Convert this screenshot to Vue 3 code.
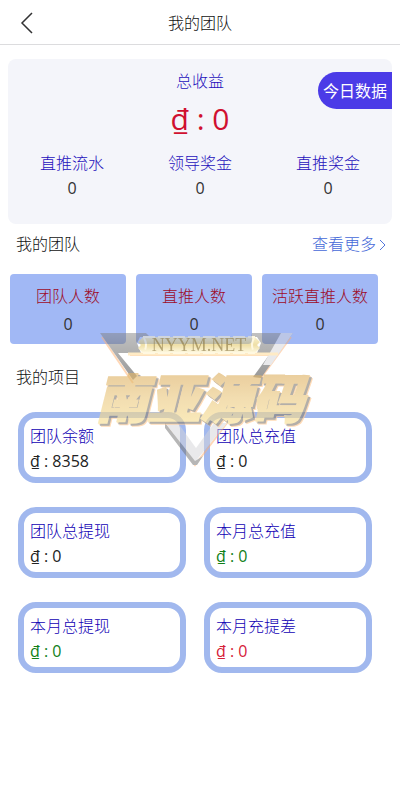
<script setup>
import {ref} from 'vue'

const CURRENCY = "₫"

const total = ref(0)

const income = ref([
    {name: "直推流水", value: 0},
    {name: "领导奖金", value: 0},
    {name: "直推奖金", value: 0}
])

const team = ref([
    {name: "团队人数", value: 0},
    {name: "直推人数", value: 0},
    {name: "活跃直推人数", value: 0}
])

const projects = ref([
    {name: "团队余额", value: 8358},
    {name: "团队总充值", value: 0},
    {name: "团队总提现", value: 0},
    {name: "本月总充值", value: 0, color: "green"},
    {name: "本月总提现", value: 0, color: "green"},
    {name: "本月充提差", value: 0, color: "red"}
])

const money = value => `${CURRENCY} : ${value}`

const goBack = () => history.back()
</script>

<template>
    <div class="page">
        <header>
            <button class="back" aria-label="返回" @click="goBack">
                <svg viewBox="0 0 14 22">
                    <path d="M12 1 L2 11 L12 21" />
                </svg>
            </button>
            <h1>我的团队</h1>
        </header>

        <main>
            <section class="summary">
                <button class="today">今日数据</button>
                <div class="label">总收益</div>
                <div class="total">{{ money(total) }}</div>
                <div class="income">
                    <div v-for="item in income" :key="item.name">
                        <div class="label">{{ item.name }}</div>
                        <div>{{ item.value }}</div>
                    </div>
                </div>
            </section>

            <div class="heading">
                <h2>我的团队</h2>
                <a href="#">
                    查看更多
                    <svg viewBox="0 0 8 12">
                        <path d="M1 1 L6 6 L1 11" />
                    </svg>
                </a>
            </div>

            <section class="team">
                <div v-for="item in team" :key="item.name" class="box">
                    <div class="name">{{ item.name }}</div>
                    <div>{{ item.value }}</div>
                </div>
            </section>

            <div class="heading second">
                <h2>我的项目</h2>
            </div>

            <section class="projects">
                <div v-for="item in projects" :key="item.name" class="card">
                    <div class="name">{{ item.name }}</div>
                    <div :class="item.color">{{ money(item.value) }}</div>
                </div>
            </section>
        </main>

        <!-- watermark -->
        <svg class="watermark" viewBox="0 0 240 160">
            <defs>
                <linearGradient id="gold" x1="0" y1="0" x2="0" y2="1">
                    <stop offset="0" stop-color="#d9a95c" />
                    <stop offset="0.5" stop-color="#eccb86" />
                    <stop offset="1" stop-color="#fbe79c" />
                </linearGradient>
                <linearGradient id="plate" x1="0" y1="0" x2="0" y2="1">
                    <stop offset="0" stop-color="#f3e49c" />
                    <stop offset="0.5" stop-color="#e0c050" />
                    <stop offset="1" stop-color="#fff6c8" />
                </linearGradient>
                <linearGradient id="steel" x1="0" y1="0" x2="0" y2="1">
                    <stop offset="0" stop-color="#858585" />
                    <stop offset="1" stop-color="#333333" />
                </linearGradient>
            </defs>

            <g class="frame">
                <path class="glow" d="M22 17 L53 63 M211 17 L181 58 M86 105 L115 145 L147 103 M50 35 H198" />
                <path fill="url(#steel)" d="M20 13 H66 L70 17 H60 L57 23 L61 33 H38 L57 56 L53 60 Z" />
                <path fill="url(#steel)" d="M172 13 H213 L181 58 L173 57 L189 35 L193 33 H177 L181 23 L177 17 H171 Z" />
                <path class="light" d="M213 13 H201 L183 45 L191 45 Z" />
                <path class="light" d="M85 103 H98 L116 128 L134 103 H147 L115 142 Z" />
                <path class="dark" d="M85 103 V108 L113 145 H117 L123 136 L115 141 Z" />
                <path class="bar" d="M48 34 H198" />
                <path fill="url(#plate)" d="M63 17 H175 L180 22 L177 25 L180 28 L175 33 H63 L58 28 L61 25 L58 22 Z" />
                <path class="edge" d="M63 17 H175 M63 33 H175 M64 18 Q68 25 64 32 M174 18 Q170 25 174 32" />
            </g>
            <text class="site" x="119" y="31">NYYM.NET</text>
            <text class="brand" x="120" y="98">南亚源码</text>
        </svg>
    </div>
</template>

<style>
    body {
        margin: 0;
        background: #fff;
    }
</style>

<style scoped>
    .page {
        position: relative;
        font-family: "Open Sans", "Noto Sans", "Noto Sans CJK SC", sans-serif;
        font-size: 16px;
        line-height: 25px;
        color: #323233;
    }

    h1, h2 {
        margin: 0;
        font-size: 16px;
        font-weight: 300;
        color: #111;
    }

    button {
        border: 0;
        padding: 0;
        font: inherit;
        cursor: pointer;
    }

    svg {
        fill: none;
    }

    header {
        display: grid;
        grid-template-columns: 48px 1fr 48px;
        align-items: center;
        height: 44px;
        border-bottom: 1px solid #dcdcde;
        text-align: center;
    }
    h1 {
        padding-top: 2px;
    }

    .back {
        display: flex;
        align-items: center;
        height: 44px;
        padding: 2px 0 0 20px;
        background: none;
    }
    .back svg {
        width: 14px;
        height: 22px;
        stroke: #323233;
        stroke-width: 1.5;
    }

    .summary {
        position: relative;
        margin: 14px 8px 0;
        padding: 10px 0 23px;
        border-radius: 8px;
        background: #f4f5fa;
        text-align: center;
    }

    .label {
        color: #2410bc;
        font-weight: 300;
    }

    .today {
        position: absolute;
        top: 13px;
        right: 0;
        padding: 7px 5px 5px;
        border-radius: 20px 0 0 20px;
        background: #4b3be7;
        color: #fff;
    }

    .total {
        padding: 2px 0 9px;
        font-size: 30px;
        line-height: 46px;
        color: #d01030;
    }

    .income {
        display: grid;
        grid-template-columns: repeat(3, 1fr);
    }

    .heading {
        display: flex;
        justify-content: space-between;
        padding: 8px 13px 17px 16px;
    }
    .heading.second {
        padding: 21px 16px 22px;
    }
    .heading a {
        display: flex;
        align-items: center;
        gap: 3px;
        color: #4468d8;
        font-weight: 300;
        text-decoration: none;
    }
    .heading svg {
        width: 8px;
        height: 12px;
        stroke: #5577dc;
    }

    .team {
        display: grid;
        grid-template-columns: repeat(3, 1fr);
        gap: 10px;
        padding: 0 22px 0 10px;
        text-align: center;
    }

    .box {
        padding: 8px 0 6px;
        border-radius: 4px;
        background: #a1b8f5;
        line-height: 28px;
    }
    .box .name {
        color: #9d0b28;
        font-weight: 300;
    }

    .projects {
        display: grid;
        grid-template-columns: 1fr 1fr;
        gap: 24px 18px;
        padding: 0 28px 24px 18px;
    }

    .card {
        padding: 6px 6px 3px;
        border: 6px solid #a1b8ee;
        border-radius: 18px;
        color: #222;
    }
    .card .name {
        color: #1000b4;
        font-weight: 300;
    }
    .card .green {
        color: #108018;
    }
    .card .red {
        color: #d62038;
    }

    .watermark {
        position: absolute;
        top: 320px;
        left: 0;
        right: 0;
        width: 240px;
        height: 160px;
        margin: 0 auto;
        pointer-events: none;
    }

    .frame {
        opacity: .5;
    }
    .glow {
        stroke: #ffb070;
        stroke-width: 2;
    }
    .light {
        fill: #d5d5d9;
    }
    .dark {
        fill: #6f6f6f;
    }
    .bar {
        stroke: #ffd98c;
        stroke-width: 3;
    }
    .edge {
        stroke: #fff3c4;
        stroke-width: 2;
        stroke-dasharray: 12 3;
    }

    .site {
        font-family: "Liberation Serif", serif;
        font-size: 18px;
        text-anchor: middle;
        fill: #8a7640;
        opacity: .6;
    }

    .brand {
        font-size: 52px;
        font-weight: 900;
        font-style: italic;
        text-anchor: middle;
        fill: url(#gold);
        stroke: url(#gold);
        stroke-width: 2;
        filter: drop-shadow(2px 2px 0 #8b857c) drop-shadow(1px 1px 0 #ffc890);
        opacity: .65;
    }
</style>
